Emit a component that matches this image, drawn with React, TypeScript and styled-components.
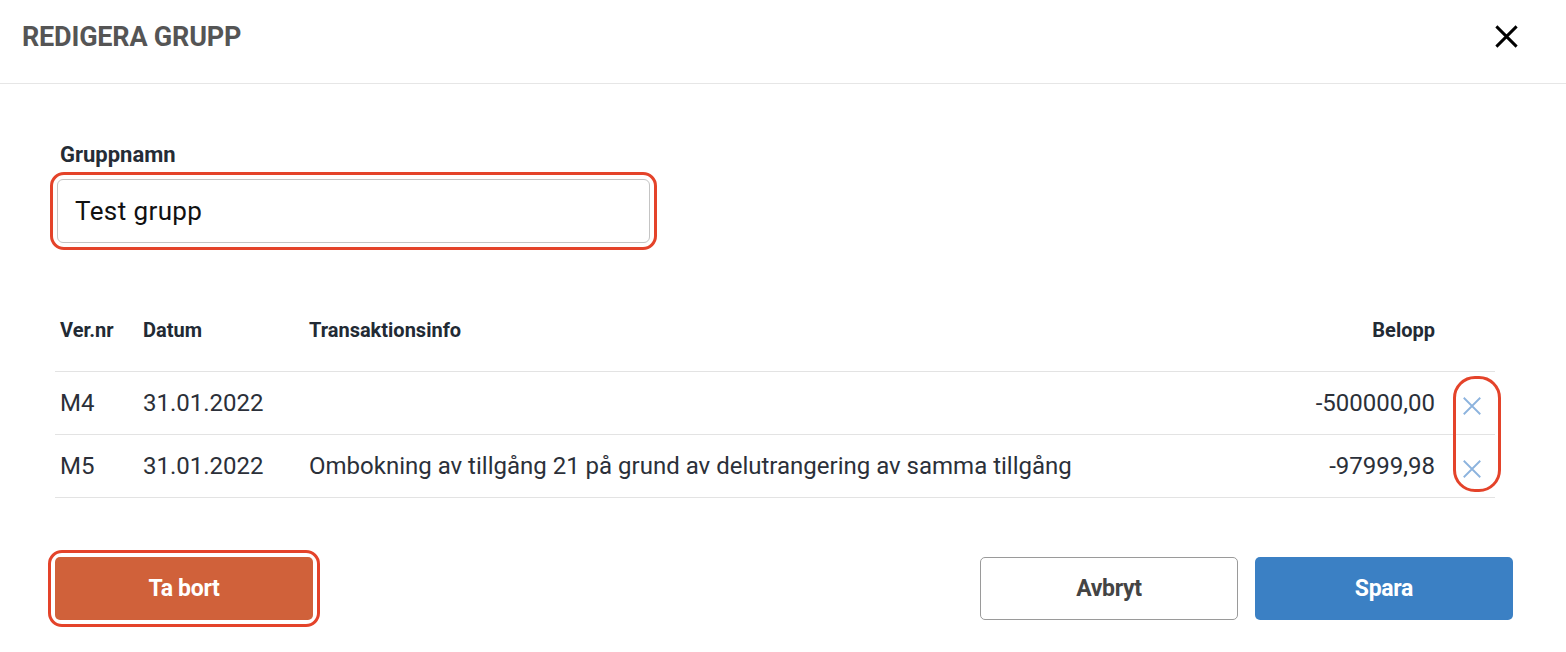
import styled, { createGlobalStyle } from "styled-components";

const GlobalStyle = createGlobalStyle`
  html, body {
    margin: 0;
    padding: 0;
    background: #ffffff;
    font-family: Roboto, "Liberation Sans", sans-serif;
  }
`;

const Modal = styled.div`
  width: 1566px;
  height: 652px;
  background: #ffffff;
  display: flex;
  flex-direction: column;
`;

const Header = styled.header`
  height: 84px;
  box-sizing: border-box;
  border-bottom: 1px solid #e6e6e6;
  display: flex;
  align-items: center;
  justify-content: space-between;
  padding: 0 46px 10px 22px;
`;

const Title = styled.h1`
  margin: 0;
  font-size: 27px;
  font-weight: 700;
  color: #555555;
  letter-spacing: -0.2px;
`;

const CloseButton = styled.button`
  border: none;
  background: transparent;
  padding: 0;
  width: 28px;
  height: 28px;
  display: flex;
  align-items: center;
  justify-content: center;
  cursor: pointer;
`;

const Body = styled.div`
  padding: 57px 53px 0 55px;
  display: flex;
  flex-direction: column;
`;

const Field = styled.div`
  display: flex;
  flex-direction: column;
  padding-left: 2px;
`;

const Label = styled.label`
  font-size: 22px;
  font-weight: 700;
  color: #252c36;
  padding-left: 3px;
  line-height: 28px;
  margin-bottom: 10px;
`;

const Highlight = styled.div<{ $inset: number; $radius: number }>`
  position: relative;
  align-self: flex-start;
  &::after {
    content: "";
    position: absolute;
    inset: ${(p) => -p.$inset}px;
    border: 3px solid #e4432a;
    border-radius: ${(p) => p.$radius}px;
    pointer-events: none;
  }
`;

const Input = styled.input`
  width: 593px;
  height: 64px;
  box-sizing: border-box;
  border: 1px solid #c4c4c4;
  border-radius: 6px;
  padding: 0 17px;
  font-family: Roboto, "Liberation Sans", sans-serif;
  font-size: 26px;
  color: #111111;
  letter-spacing: 0.4px;
  outline: none;
`;

const TableWrap = styled.div`
  position: relative;
  margin-top: 46px;
  width: 1440px;
`;

// annotation ring drawn over the remove-icons column
const ColumnMarker = styled.div`
  position: absolute;
  left: 1398px;
  top: 87px;
  width: 48px;
  height: 116px;
  box-sizing: border-box;
  border: 3px solid #e4432a;
  border-radius: 22px;
  pointer-events: none;
`;

const Table = styled.table`
  width: 100%;
  border-collapse: collapse;
  table-layout: fixed;
`;

const Th = styled.th<{ $align?: string }>`
  text-align: ${(p) => p.$align || "left"};
  font-size: 20px;
  font-weight: 700;
  color: #222a34;
  line-height: 24px;
  padding: 29px 5px 29px;
  border-bottom: 1px solid #e3e3e3;
`;

const Td = styled.td<{ $align?: string }>`
  text-align: ${(p) => p.$align || "left"};
  font-size: 24px;
  color: #2b3039;
  height: 62px;
  padding: 0 5px;
  border-bottom: 1px solid #e3e3e3;
  white-space: nowrap;
  vertical-align: middle;
`;

const IconCell = styled.td`
  height: 62px;
  padding: 0 0 0 21px;
  border-bottom: 1px solid #e3e3e3;
  vertical-align: middle;
`;

const RemoveButton = styled.button`
  border: none;
  background: transparent;
  padding: 0;
  width: 22px;
  height: 22px;
  display: flex;
  align-items: center;
  justify-content: center;
  margin-top: 6px;
  cursor: pointer;
`;

const Footer = styled.div`
  display: flex;
  align-items: center;
  justify-content: space-between;
  margin-top: 59px;
`;

const ButtonGroup = styled.div`
  display: flex;
  gap: 17px;
`;

const Button = styled.button<{ $variant: "danger" | "outline" | "primary" }>`
  width: 258px;
  height: 63px;
  box-sizing: border-box;
  border-radius: 5px;
  font-family: Roboto, "Liberation Sans", sans-serif;
  font-size: 23px;
  font-weight: 700;
  letter-spacing: -0.3px;
  cursor: pointer;
  border: ${(p) => (p.$variant === "outline" ? "1px solid #9a9a9a" : "none")};
  color: ${(p) => (p.$variant === "outline" ? "#444444" : "#ffffff")};
  background: ${(p) =>
    p.$variant === "danger"
      ? "#d0613a"
      : p.$variant === "primary"
      ? "#3b80c4"
      : "#ffffff"};
`;

const CloseIcon = ({ size, color, width }: { size: number; color: string; width: number }) => (
  <svg width={size} height={size} viewBox="0 0 24 24" fill="none">
    <path d="M3 3L21 21M21 3L3 21" stroke={color} strokeWidth={width} />
  </svg>
);

const rows = [
  { nr: "M4", date: "31.01.2022", info: "", amount: "-500000,00" },
  {
    nr: "M5",
    date: "31.01.2022",
    info: "Ombokning av tillgång 21 på grund av delutrangering av samma tillgång",
    amount: "-97999,98",
  },
];

export default function App() {
  return (
    <>
      <GlobalStyle />
      <Modal>
        <Header>
          <Title>REDIGERA GRUPP</Title>
          <CloseButton aria-label="Stäng">
            <CloseIcon size={27} color="#000000" width={2.6} />
          </CloseButton>
        </Header>
        <Body>
          <Field>
            <Label>Gruppnamn</Label>
            <Highlight $inset={7} $radius={14}>
              <Input defaultValue="Test grupp" />
            </Highlight>
          </Field>

          <TableWrap>
            <Table>
              <colgroup>
                <col style={{ width: 83 }} />
                <col style={{ width: 166 }} />
                <col />
                <col style={{ width: 180 }} />
                <col style={{ width: 55 }} />
              </colgroup>
              <thead>
                <tr>
                  <Th>Ver.nr</Th>
                  <Th>Datum</Th>
                  <Th>Transaktionsinfo</Th>
                  <Th $align="right">Belopp</Th>
                  <Th />
                </tr>
              </thead>
              <tbody>
                {rows.map((r) => (
                  <tr key={r.nr}>
                    <Td>{r.nr}</Td>
                    <Td>{r.date}</Td>
                    <Td>{r.info}</Td>
                    <Td $align="right">{r.amount}</Td>
                    <IconCell>
                      <RemoveButton aria-label="Ta bort rad">
                        <CloseIcon size={24} color="#8cb3de" width={2} />
                      </RemoveButton>
                    </IconCell>
                  </tr>
                ))}
              </tbody>
            </Table>
            <ColumnMarker />
          </TableWrap>

          <Footer>
            <Highlight $inset={7} $radius={14}>
              <Button $variant="danger">Ta bort</Button>
            </Highlight>
            <ButtonGroup>
              <Button $variant="outline">Avbryt</Button>
              <Button $variant="primary">Spara</Button>
            </ButtonGroup>
          </Footer>
        </Body>
      </Modal>
    </>
  );
}
